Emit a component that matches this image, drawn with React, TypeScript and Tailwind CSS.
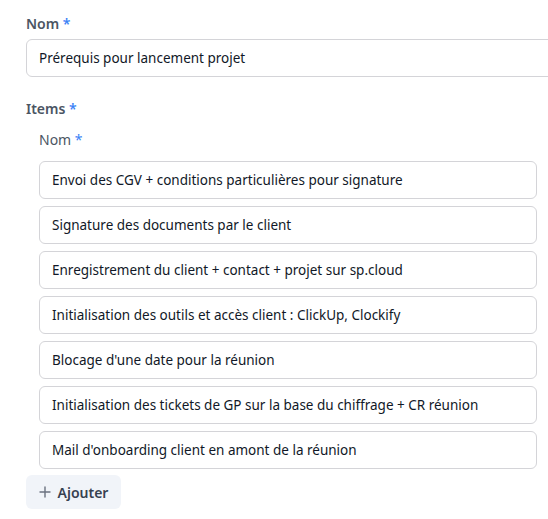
const items = [
  "Envoi des CGV + conditions particulières pour signature",
  "Signature des documents par le client",
  "Enregistrement du client + contact + projet sur sp.cloud",
  "Initialisation des outils et accès client : ClickUp, Clockify",
  "Blocage d'une date pour la réunion",
  "Initialisation des tickets de GP sur la base du chiffrage + CR réunion",
  "Mail d'onboarding client en amont de la réunion",
];

function Label({ text, light }: { text: string; light?: boolean }) {
  return (
    <div className={`text-[14px] leading-5 text-[#4b5563] ${light ? "font-normal" : "font-semibold"}`}>
      {text} <span className="text-[#3b82f6]">*</span>
    </div>
  );
}

export default function App() {
  return (
    <div
      className="w-[548px] h-[519px] overflow-hidden bg-white pl-[26px] pt-[14px]"
      style={{ fontFamily: '"Noto Sans", "Open Sans", sans-serif' }}
    >
      <Label text="Nom" />
      <div className="mt-[5px] w-[560px] h-[38px] flex items-center px-3 border border-[#d4d4d8] rounded-md text-[13.5px] text-[#111827]">
        Prérequis pour lancement projet
      </div>

      <div className="mt-[22px]">
        <Label text="Items" />
      </div>

      <div className="pl-[13px] mt-[11px]">
        <Label text="Nom" light />
        <div className="mt-[11px] flex flex-col gap-[7px] w-[498px]">
          {items.map((item) => (
            <div
              key={item}
              className="h-[38px] flex items-center px-3 border border-[#d4d4d8] rounded-md text-[13.5px] text-[#111827]"
            >
              {item}
            </div>
          ))}
        </div>
      </div>

      <button className="mt-[6px] h-[34px] w-[95px] flex items-center justify-center gap-[7px] rounded-md bg-[#f1f4f9] text-[14px] font-semibold text-[#374151]">
        <svg width="12" height="12" viewBox="0 0 12 12" fill="none" stroke="#6b7280" strokeWidth="1.4" strokeLinecap="round">
          <path d="M6 1v10M1 6h10" />
        </svg>
        Ajouter
      </button>
    </div>
  );
}
